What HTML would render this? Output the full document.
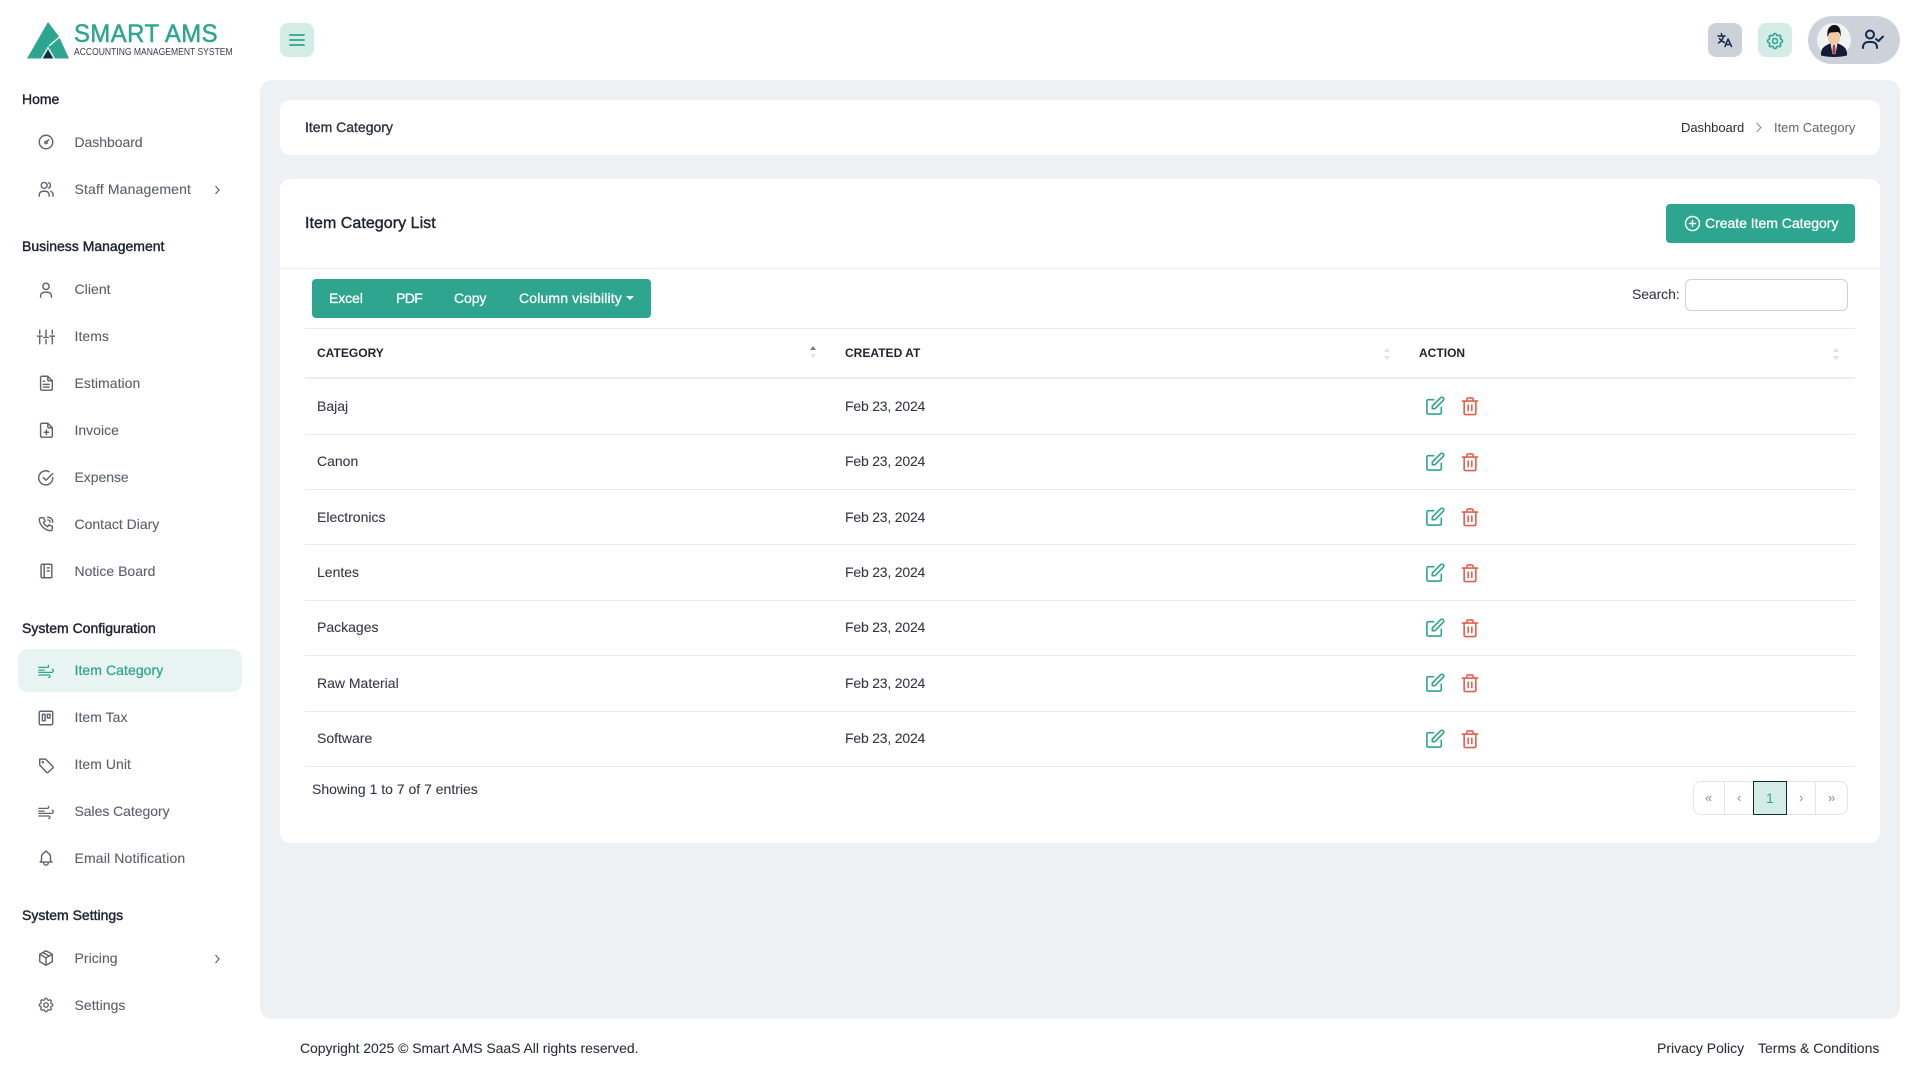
<!DOCTYPE html>
<html><head><meta charset="utf-8"><title>Item Category</title>
<style>
*{box-sizing:border-box}
html,body{margin:0;width:1920px;height:1080px;overflow:hidden;background:#fff;font-family:"Liberation Sans",sans-serif;color:#2a2f3a}
.a{position:absolute}
.t{position:absolute;line-height:20px;height:20px;white-space:nowrap;font-size:14px}
.h{color:#1c2230;-webkit-text-stroke:.4px #1c2230;font-size:14px}
.n{color:#5a606b;font-size:14px;letter-spacing:.05px;-webkit-text-stroke:.1px #5a606b;margin-left:.5px}
.i{position:absolute;width:20px;height:20px;fill:none;stroke:#5f6570;stroke-width:1.6;stroke-linecap:round;stroke-linejoin:round;transform:scale(.9)}
.r{color:#333845;font-size:14px;-webkit-text-stroke:.08px #333845}
.dt{letter-spacing:-.2px;margin-left:1px}
.th{font-size:12px;font-weight:700;color:#1f2430;margin-left:1px;letter-spacing:.02px}
.line{position:absolute;height:1px;background:#e9ebee}
.e{position:absolute;width:22px;height:22px;fill:none;stroke:#2ea58e;stroke-width:1.8;stroke-linecap:round;stroke-linejoin:round;transform:scale(.9)}
.d{position:absolute;width:22px;height:22px;fill:none;stroke:#e4604e;stroke-width:1.8;stroke-linecap:round;stroke-linejoin:round;transform:scale(.9)}
.w{color:#fff;-webkit-text-stroke:.3px #fff}
</style></head><body>
<svg width="0" height="0" style="position:absolute"><defs>
<symbol id="edit" viewBox="0 0 22 22"><path d="M9.5 4H3.5A1.5 1.5 0 0 0 2 5.500V18.500A1.500 1.500 0 0 0 3.500 20H16.500A1.500 1.500 0 0 0 18 18.500V12.500"/><path d="M8 14V11L17.300 1.800A1.900 1.900 0 0 1 20.200 4.700L11 14Z"/></symbol>
<symbol id="trash" viewBox="0 0 22 22"><path d="M2.500 5.500H19.500"/><path d="M4.500 5.500V19A1.500 1.500 0 0 0 6 20.500H16A1.500 1.500 0 0 0 17.500 19V5.500"/><path d="M7.500 5.500V3.500A1.500 1.500 0 0 1 9 2H13A1.500 1.500 0 0 1 14.500 3.500V5.500"/><path d="M9 10V16M13 10V16"/></symbol>
<symbol id="wind" viewBox="0 0 20 20"><path d="M2 6H11.500C13 6 13.500 4.500 12.500 3.800"/><path d="M2 9H8"/><path d="M2 11.500H16.500C18.500 11.500 18.700 8.300 16.800 8"/><path d="M2 14.500H13C14.800 14.500 14.800 17 13 17.300"/></symbol>
<symbol id="gear" viewBox="0 0 24 24"><path d="M10.300 4.300C10.700 2.600 13.300 2.600 13.700 4.300A1.700 1.700 0 0 0 16.300 5.400C17.800 4.500 19.500 6.200 18.600 7.700A1.700 1.700 0 0 0 19.700 10.300C21.400 10.700 21.400 13.300 19.700 13.700A1.700 1.700 0 0 0 18.600 16.300C19.500 17.800 17.800 19.500 16.300 18.600A1.700 1.700 0 0 0 13.700 19.700C13.300 21.400 10.700 21.400 10.300 19.700A1.700 1.700 0 0 0 7.700 18.600C6.200 19.500 4.500 17.800 5.400 16.300A1.700 1.700 0 0 0 4.300 13.700C2.600 13.300 2.600 10.700 4.300 10.300A1.700 1.700 0 0 0 5.400 7.700C4.500 6.200 6.200 4.500 7.700 5.400A1.700 1.700 0 0 0 10.300 4.300Z"/><circle cx="12" cy="12" r="3"/></symbol>
</defs></svg>

<!-- logo -->
<svg class="a" style="left:26px;top:21px" width="46" height="40" viewBox="26 21 46 40">
<polygon points="48,22 27,58.500 69,58.500 59,36.500" fill="#2ea58e"/>
<path d="M59.500 37L49 46" stroke="#fff" stroke-width="1.300" fill="none"/>
<path d="M41 59.500L48 47.500L55 59.500" stroke="#fff" stroke-width="1.200" fill="none"/>
<polygon points="48,50 43,58.500 53,58.500" fill="#16294a"/>
</svg>
<div class="t" style="left:74px;top:22px;font-size:25px;line-height:24px;height:24px;color:#2ea58e;letter-spacing:.5px;transform-origin:0 0;transform:scaleX(.955);-webkit-text-stroke:.5px #2ea58e">SMART AMS</div>
<div class="t" style="left:74px;top:46px;font-size:10.500px;line-height:12px;height:12px;color:#3a4050;transform-origin:0 0;transform:scaleX(.815)">ACCOUNTING MANAGEMENT SYSTEM</div>

<!-- top bar -->
<div class="a" style="left:280px;top:23px;width:34px;height:34px;border-radius:8px;background:#d3ede6"></div>
<svg class="a" style="left:289px;top:33px" width="16" height="14" viewBox="0 0 16 14" fill="none" stroke="#2ea58e" stroke-width="1.800" stroke-linecap="round"><path d="M1 2H15M1 7H15M1 12H15"/></svg>
<div class="a" style="left:1708px;top:23px;width:34px;height:34px;border-radius:8px;background:#ccd1da"></div>
<svg class="a" style="left:1717px;top:32px;" width="16" height="16" viewBox="0 0 16 16" fill="none" stroke="#16294a" stroke-width="1.500" stroke-linecap="round" stroke-linejoin="round"><path d="M1 4H8M4.500 1.500V4M6.500 4C6 7 4 9.500 1.500 11M2.500 6.500C3.500 8.500 5 9.500 7.500 10.500M8 14.500L11 7L14.500 14.500M9 12.500H13.500"/></svg>
<div class="a" style="left:1758px;top:23px;width:34px;height:34px;border-radius:8px;background:#d3ede6"></div>
<svg class="a" style="left:1765px;top:31px;fill:none;stroke:#2ea58e;stroke-width:1.900" width="20" height="20"><use href="#gear"/></svg>
<div class="a" style="left:1808px;top:16px;width:92px;height:48px;border-radius:24px;background:#ccd1da"></div>
<div class="a" style="left:1817px;top:23px;width:34px;height:34px;border-radius:50%;background:#f2f2f3;overflow:hidden"></div>
<svg class="a" style="left:1817px;top:23px" width="34" height="34" viewBox="0 0 34 34">
<path d="M4 32.500C3.500 25.500 7 23 13 20.500H21C27 23 30.500 25.500 30 32.500C22 34.500 12 34.500 4 32.500Z" fill="#141c35"/>
<path d="M13.500 20H20.500L18.500 31H15.500Z" fill="#efe4dc"/>
<path d="M16 21.500H18L18.700 29L17 32.500L15.300 29Z" fill="#a23d50"/>
<ellipse cx="17" cy="14.500" rx="6" ry="7.500" fill="#f1c9a5"/>
<path d="M10.500 14C9.500 6 13 2 17.500 2C22.500 2 24.500 7 23.500 14C23 10 22 9 20 9C17 9.500 13.500 9 12.500 10C11.500 11 11 13 10.500 14Z" fill="#0e1016"/>
</svg>
<svg class="a" style="left:1861px;top:28px" width="24" height="24" viewBox="0 0 24 24" fill="none" stroke="#16294a" stroke-width="2" stroke-linecap="round" stroke-linejoin="round"><circle cx="9" cy="6.500" r="4"/><path d="M2 20V18.500A5 5 0 0 1 7 14H11A5 5 0 0 1 16 18.500V20"/><path d="M15 11L17.500 13L22 8.500"/></svg>

<!-- panel -->
<div class="a" style="left:260px;top:80px;width:1640px;height:939px;background:#edf1f4;border-radius:12px"></div>
<div class="a" style="left:280px;top:100px;width:1600px;height:55px;background:#fff;border-radius:10px"></div>
<div class="a" style="left:280px;top:179px;width:1600px;height:664px;background:#fff;border-radius:10px"></div>

<div class="t h" style="left:305px;top:117px;color:#333845;-webkit-text-stroke-color:#333845">Item Category</div>
<div class="t" style="left:1681px;top:118px;font-size:13px;color:#2a2f3a;letter-spacing:-.05px">Dashboard</div>
<svg class="a" style="left:1754px;top:122px" width="9" height="11" viewBox="0 0 9 11" fill="none" stroke="#8a8f98" stroke-width="1.100"><path d="M2.500 1L7 5.500L2.500 10"/></svg>
<div class="t" style="left:1774px;top:118px;font-size:13px;color:#5f6570;letter-spacing:-.02px">Item Category</div>

<div class="t h" style="left:305px;top:214px;font-size:16px;letter-spacing:.05px">Item Category List</div>
<div class="a" style="left:1666px;top:204px;width:189px;height:39px;background:#2ea58e;border-radius:4px"></div>
<svg class="a" style="left:1684px;top:215px" width="17" height="17" viewBox="0 0 17 17" fill="none" stroke="#fff" stroke-width="1.400" stroke-linecap="round"><circle cx="8.500" cy="8.500" r="7"/><path d="M8.500 5.500V11.500M5.500 8.500H11.500"/></svg>
<div class="t w" style="left:1705px;top:213px;font-size:14px;letter-spacing:-.02px">Create Item Category</div>
<div class="line" style="left:280px;top:268px;width:1600px"></div>

<div class="a" style="left:312px;top:279px;width:339px;height:39px;background:#2ea58e;border-radius:4px"></div>
<div class="t w" style="left:329px;top:288px;letter-spacing:-.1px">Excel</div>
<div class="t w" style="left:396px;top:288px;letter-spacing:-.6px">PDF</div>
<div class="t w" style="left:454px;top:288px;letter-spacing:-.1px">Copy</div>
<div class="t w" style="left:519px;top:288px;letter-spacing:.15px">Column visibility</div>
<div class="a" style="left:626px;top:296px;width:0;height:0;border-left:4px solid transparent;border-right:4px solid transparent;border-top:4px solid #fff"></div>

<div class="t r" style="left:1632px;top:284px;letter-spacing:-.1px">Search:</div>
<div class="a" style="left:1685px;top:279px;width:163px;height:32px;border:1px solid #ced1d6;border-radius:6px;background:#fff"></div>

<div class="line" style="left:305px;top:328px;width:1550px"></div>
<div class="line" style="left:305px;top:377px;width:1550px;height:2px;background:#ebedf0"></div>
<div class="t th" style="left:316px;top:343px">CATEGORY</div>
<div class="t th" style="left:844px;top:343px">CREATED AT</div>
<div class="t th" style="left:1418px;top:343px">ACTION</div>
<svg class="a" style="left:809px;top:345px" width="8" height="14"><path d="M1 5L4 1L7 5Z" fill="#77797f"/><path d="M1 9L4 13L7 9Z" fill="#e2e4e7"/></svg>
<svg class="a" style="left:1383px;top:347px" width="8" height="14"><path d="M1 5L4 1L7 5Z" fill="#dfe1e4"/><path d="M1 9L4 13L7 9Z" fill="#dfe1e4"/></svg>
<svg class="a" style="left:1832px;top:347px" width="8" height="14"><path d="M1 5L4 1L7 5Z" fill="#dfe1e4"/><path d="M1 9L4 13L7 9Z" fill="#dfe1e4"/></svg>

<!-- rows -->
<div class="t r" style="left:317px;top:396px">Bajaj</div><div class="t r dt" style="left:844px;top:396px">Feb 23, 2024</div>
<svg class="e" style="left:1424px;top:395px"><use href="#edit"/></svg><svg class="d" style="left:1459px;top:395px"><use href="#trash"/></svg>
<div class="line" style="left:305px;top:434px;width:1550px"></div>
<div class="t r" style="left:317px;top:451px">Canon</div><div class="t r dt" style="left:844px;top:451px">Feb 23, 2024</div>
<svg class="e" style="left:1424px;top:451px"><use href="#edit"/></svg><svg class="d" style="left:1459px;top:451px"><use href="#trash"/></svg>
<div class="line" style="left:305px;top:489px;width:1550px"></div>
<div class="t r" style="left:317px;top:507px">Electronics</div><div class="t r dt" style="left:844px;top:507px">Feb 23, 2024</div>
<svg class="e" style="left:1424px;top:506px"><use href="#edit"/></svg><svg class="d" style="left:1459px;top:506px"><use href="#trash"/></svg>
<div class="line" style="left:305px;top:544px;width:1550px"></div>
<div class="t r" style="left:317px;top:562px">Lentes</div><div class="t r dt" style="left:844px;top:562px">Feb 23, 2024</div>
<svg class="e" style="left:1424px;top:562px"><use href="#edit"/></svg><svg class="d" style="left:1459px;top:562px"><use href="#trash"/></svg>
<div class="line" style="left:305px;top:600px;width:1550px"></div>
<div class="t r" style="left:317px;top:617px">Packages</div><div class="t r dt" style="left:844px;top:617px">Feb 23, 2024</div>
<svg class="e" style="left:1424px;top:617px"><use href="#edit"/></svg><svg class="d" style="left:1459px;top:617px"><use href="#trash"/></svg>
<div class="line" style="left:305px;top:655px;width:1550px"></div>
<div class="t r" style="left:317px;top:673px">Raw Material</div><div class="t r dt" style="left:844px;top:673px">Feb 23, 2024</div>
<svg class="e" style="left:1424px;top:672px"><use href="#edit"/></svg><svg class="d" style="left:1459px;top:672px"><use href="#trash"/></svg>
<div class="line" style="left:305px;top:711px;width:1550px"></div>
<div class="t r" style="left:317px;top:728px">Software</div><div class="t r dt" style="left:844px;top:728px">Feb 23, 2024</div>
<svg class="e" style="left:1424px;top:728px"><use href="#edit"/></svg><svg class="d" style="left:1459px;top:728px"><use href="#trash"/></svg>
<div class="line" style="left:305px;top:766px;width:1550px"></div>

<div class="t r" style="left:312px;top:779px">Showing 1 to 7 of 7 entries</div>
<div class="a" style="left:1693px;top:781px;width:155px;height:34px;border:1px solid #e2e4e7;border-radius:8px"></div>
<div class="a" style="left:1724px;top:781px;width:1px;height:34px;background:#e2e4e7"></div>
<div class="a" style="left:1815px;top:781px;width:1px;height:34px;background:#e2e4e7"></div>
<div class="a" style="left:1753px;top:781px;width:34px;height:34px;background:#d3ede6;border:1px solid #12293c"></div>
<div class="t" style="left:1705px;top:788px;font-size:13px;color:#8a8f98">«</div>
<div class="t" style="left:1737px;top:788px;font-size:13px;color:#8a8f98">‹</div>
<div class="t" style="left:1766px;top:788px;font-size:14px;color:#2ea58e">1</div>
<div class="t" style="left:1799px;top:788px;font-size:13px;color:#8a8f98">›</div>
<div class="t" style="left:1828px;top:788px;font-size:13px;color:#8a8f98">»</div>

<!-- footer -->
<div class="t r" style="left:300px;top:1038px;color:#2a2f3a;letter-spacing:-.05px">Copyright 2025 © Smart AMS SaaS All rights reserved.</div>
<div class="t r" style="left:1657px;top:1038px;color:#2a2f3a">Privacy Policy</div>
<div class="t r" style="left:1758px;top:1038px;color:#2a2f3a">Terms &amp; Conditions</div>

<!-- sidebar -->
<div class="t h" style="left:22px;top:89px">Home</div>
<svg class="i" style="left:36px;top:132px" viewBox="0 0 20 20"><circle cx="10" cy="10" r="7.500"/><circle cx="10" cy="10.500" r="1.300"/><path d="M11 9.500L13 7.500"/></svg>
<div class="t n" style="left:74px;top:132px;letter-spacing:-.05px">Dashboard</div>
<svg class="i" style="left:36px;top:179px" viewBox="0 0 20 20"><circle cx="8" cy="6" r="3.300"/><path d="M2.500 18V16.500A4 4 0 0 1 6.500 12.500H9.500A4 4 0 0 1 13.500 16.500V18"/><path d="M13 3A3.300 3.300 0 0 1 13 9"/><path d="M15.500 12.600A4 4 0 0 1 17.800 16.300V18"/></svg>
<div class="t n" style="left:74px;top:179px;letter-spacing:.15px">Staff Management</div>
<svg class="a" style="left:213px;top:184px" width="8" height="12" viewBox="0 0 8 12" fill="none" stroke="#5f6570" stroke-width="1.200"><path d="M2.500 2L6 6L2.500 10"/></svg>

<div class="t h" style="left:22px;top:236px">Business Management</div>
<svg class="i" style="left:36px;top:280px" viewBox="0 0 20 20"><circle cx="10" cy="6" r="3.500"/><path d="M4 18V16.500A4 4 0 0 1 8 12.500H12A4 4 0 0 1 16 16.500V18"/></svg>
<div class="t n" style="left:74px;top:279px">Client</div>
<svg class="i" style="left:36px;top:327px" viewBox="0 0 20 20"><path d="M3 2.500V6.500M3 10.500V17.500M10 2.500V9M10 13V17.500M17 2.500V6.500M17 10.500V17.500M.5 9H5.500M7.500 10.500H12.500M14.500 9H19.500"/></svg>
<div class="t n" style="left:74px;top:326px">Items</div>
<svg class="i" style="left:36px;top:373px" viewBox="0 0 20 20"><path d="M12 2.500V6.500A1 1 0 0 0 13 7.500H17"/><path d="M15 18H5.500A1.500 1.500 0 0 1 4 16.500V4A1.500 1.500 0 0 1 5.500 2.500H12L17 7.500V16.500A1.500 1.500 0 0 1 15 18Z"/><path d="M7 8H8.500M7 11.500H13.500M7 14.500H13.500"/></svg>
<div class="t n" style="left:74px;top:373px">Estimation</div>
<svg class="i" style="left:36px;top:420px" viewBox="0 0 20 20"><path d="M12 2.500V6.500A1 1 0 0 0 13 7.500H17"/><path d="M15 18H5.500A1.500 1.500 0 0 1 4 16.500V4A1.500 1.500 0 0 1 5.500 2.500H12L17 7.500V16.500A1.500 1.500 0 0 1 15 18Z"/><path d="M10.500 10V15M8 12.500H13"/></svg>
<div class="t n" style="left:74px;top:420px;letter-spacing:0">Invoice</div>
<svg class="i" style="left:36px;top:468px" viewBox="0 0 20 20"><path d="M17.500 9.500A7.800 7.800 0 1 1 13.500 3"/><path d="M7 9.500L10 12.500L17.500 5"/></svg>
<div class="t n" style="left:74px;top:467px;letter-spacing:-.05px">Expense</div>
<svg class="i" style="left:36px;top:514px" viewBox="0 0 20 20"><path d="M4.500 3H7.500L9 7L7 8.200A10 10 0 0 0 11.800 13L13 11L17 12.500V15.500A2 2 0 0 1 15 17.500C8.500 17 3 11.500 2.500 5A2 2 0 0 1 4.500 3"/><path d="M12 5.500A2.500 2.500 0 0 1 14.500 8M12 2.500A5.500 5.500 0 0 1 17.500 8"/></svg>
<div class="t n" style="left:74px;top:514px;letter-spacing:0">Contact Diary</div>
<svg class="i" style="left:36px;top:561px" viewBox="0 0 20 20"><path d="M6 2.500H15.500A1 1 0 0 1 16.500 3.500V16.500A1 1 0 0 1 15.500 17.500H6A1.500 1.500 0 0 1 4.500 16V4A1.500 1.500 0 0 1 6 2.500ZM8 2.500V17.500M11.500 6.500H13.500M11.500 10H13.500"/></svg>
<div class="t n" style="left:74px;top:561px;letter-spacing:0">Notice Board</div>

<div class="t h" style="left:22px;top:618px">System Configuration</div>
<div class="a" style="left:18px;top:649px;width:224px;height:43px;background:#e8f4f1;border-radius:10px"></div>
<svg class="i" style="left:36px;top:661px;stroke:#2ea58e;stroke-width:1.400"><use href="#wind"/></svg>
<div class="t n" style="left:74px;top:660px;color:#2ea58e;-webkit-text-stroke:.25px #2ea58e;letter-spacing:.07px">Item Category</div>
<svg class="i" style="left:36px;top:708px" viewBox="0 0 20 20"><rect x="2.500" y="2.500" width="15" height="15" rx="1.500"/><rect x="6" y="6" width="3" height="7"/><rect x="11.500" y="6" width="3" height="4"/></svg>
<div class="t n" style="left:74px;top:707px">Item Tax</div>
<svg class="i" style="left:36px;top:755px" viewBox="0 0 20 20"><path d="M3 3.500H9.500L17.500 11.500A1.500 1.500 0 0 1 17.500 13.500L12.500 18A1.500 1.500 0 0 1 10.500 18L3 10V3.500Z"/><circle cx="6.500" cy="7" r=".6"/></svg>
<div class="t n" style="left:74px;top:754px">Item Unit</div>
<svg class="i" style="left:36px;top:802px;stroke-width:1.400"><use href="#wind"/></svg>
<div class="t n" style="left:74px;top:801px;letter-spacing:-.05px">Sales Category</div>
<svg class="i" style="left:36px;top:848px" viewBox="0 0 20 20"><path d="M8.500 4A1.500 1.500 0 0 1 11.500 4A5.500 5.500 0 0 1 15 9V12A3 3 0 0 0 16.500 14.500H3.500A3 3 0 0 0 5 12V9A5.500 5.500 0 0 1 8.500 4"/><path d="M7.500 14.500V15.500A2.500 2.500 0 0 0 12.500 15.500V14.500"/></svg>
<div class="t n" style="left:74px;top:848px;letter-spacing:.15px">Email Notification</div>

<div class="t h" style="left:22px;top:905px">System Settings</div>
<svg class="i" style="left:36px;top:948px" viewBox="0 0 20 20"><path d="M10 2L17 5.800V14L10 18L3 14V5.800ZM3 5.800L10 9.800L17 5.800M10 9.800V18M6.500 3.900L13.500 7.900"/></svg>
<div class="t n" style="left:74px;top:948px">Pricing</div>
<svg class="a" style="left:213px;top:953px" width="8" height="12" viewBox="0 0 8 12" fill="none" stroke="#5f6570" stroke-width="1.200"><path d="M2.500 2L6 6L2.500 10"/></svg>
<svg class="i" style="left:36px;top:995px;stroke-width:1.800"><use href="#gear" width="20" height="20"/></svg>
<div class="t n" style="left:74px;top:995px">Settings</div>
</body></html>
